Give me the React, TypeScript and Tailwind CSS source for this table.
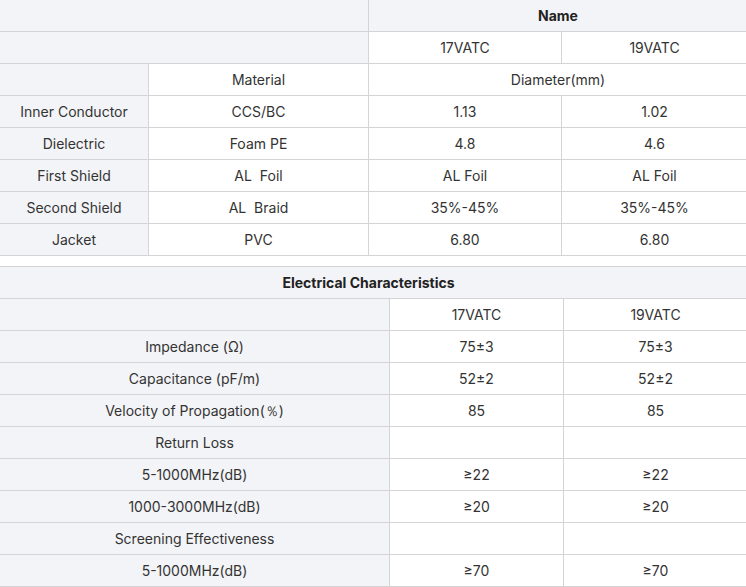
import React from 'react'

const gray = 'bg-[#f3f4f7]'
const cell = 'h-8 p-0 border border-[#d4d4d4] text-center align-middle'

interface SpecRow {
  label: string
  material: string
  a: string
  b: string
}

const structure: SpecRow[] = [
  { label: 'Inner Conductor', material: 'CCS/BC', a: '1.13', b: '1.02' },
  { label: 'Dielectric', material: 'Foam PE', a: '4.8', b: '4.6' },
  { label: 'First Shield', material: 'AL  Foil', a: 'AL Foil', b: 'AL Foil' },
  { label: 'Second Shield', material: 'AL  Braid', a: '35%-45%', b: '35%-45%' },
  { label: 'Jacket', material: 'PVC', a: '6.80', b: '6.80' },
]

const electrical: Array<[string, string, string]> = [
  ['Impedance (Ω)', '75±3', '75±3'],
  ['Capacitance (pF/m)', '52±2', '52±2'],
  ['Velocity of Propagation(％)', '85', '85'],
  ['Return Loss', '', ''],
  ['5-1000MHz(dB)', '≥22', '≥22'],
  ['1000-3000MHz(dB)', '≥20', '≥20'],
  ['Screening Effectiveness', '', ''],
  ['5-1000MHz(dB)', '≥70', '≥70'],
]

export default function App() {
  return (
    <div
      className="w-[746px] h-[587px] overflow-hidden bg-white text-[14px] text-[#333]"
      style={{ fontFamily: 'Inter, "Noto Sans", sans-serif' }}
    >
      <table className="table-fixed border-collapse w-[748px] -ml-px -mt-px">
        <colgroup>
          <col className="w-[149px]" />
          <col className="w-[220px]" />
          <col className="w-[193px]" />
          <col className="w-[186px]" />
        </colgroup>
        <tbody>
          <tr>
            <td colSpan={2} className={`${cell} ${gray}`} />
            <td colSpan={2} className={`${cell} ${gray} font-bold text-[#222]`}>Name</td>
          </tr>
          <tr>
            <td colSpan={2} className={`${cell} ${gray}`} />
            <td className={cell}>17VATC</td>
            <td className={cell}>19VATC</td>
          </tr>
          <tr>
            <td className={`${cell} ${gray}`} />
            <td className={cell}>Material</td>
            <td colSpan={2} className={cell}>Diameter(mm)</td>
          </tr>
          {structure.map((r) => (
            <tr key={r.label}>
              <td className={`${cell} ${gray}`}>{r.label}</td>
              <td className={`${cell} whitespace-pre`}>{r.material}</td>
              <td className={cell}>{r.a}</td>
              <td className={cell}>{r.b}</td>
            </tr>
          ))}
        </tbody>
      </table>

      <table className="table-fixed border-collapse w-[748px] -ml-px mt-[10px]">
        <colgroup>
          <col className="w-[390px]" />
          <col className="w-[174px]" />
          <col className="w-[184px]" />
        </colgroup>
        <tbody>
          <tr>
            <td colSpan={3} className={`${cell} ${gray} pr-[10px] font-bold text-[#222]`}>
              Electrical Characteristics
            </td>
          </tr>
          <tr>
            <td className={`${cell} ${gray}`} />
            <td className={cell}>17VATC</td>
            <td className={cell}>19VATC</td>
          </tr>
          {electrical.map(([label, a, b], i) => (
            <tr key={i}>
              <td className={`${cell} ${gray}`}>{label}</td>
              <td className={cell}>{a}</td>
              <td className={cell}>{b}</td>
            </tr>
          ))}
        </tbody>
      </table>
    </div>
  )
}
